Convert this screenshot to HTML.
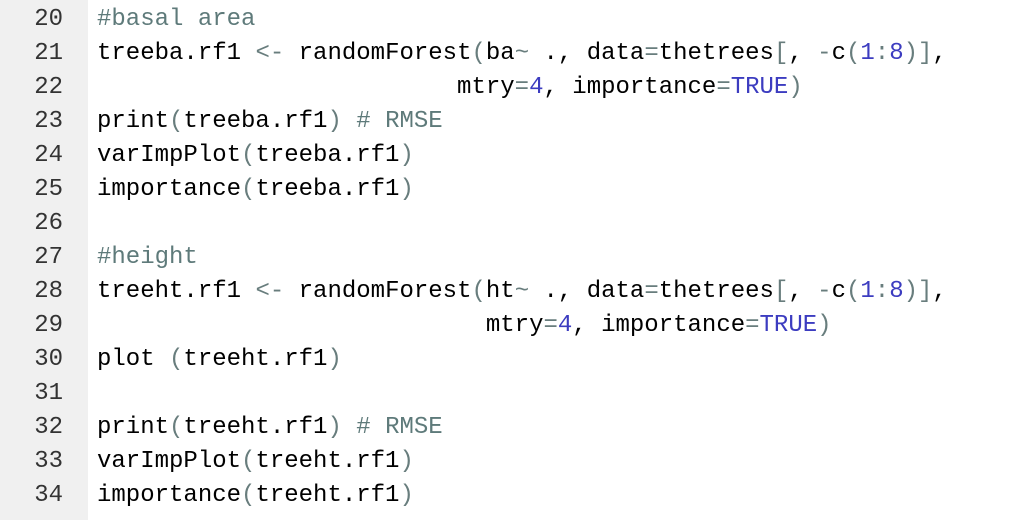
<!DOCTYPE html>
<html style="overflow:hidden;height:520px"><head><style>
body{margin:0;width:1022px;height:520px;overflow:hidden;background:#fff;font-family:"Liberation Mono",monospace;font-size:24px;position:relative;}
.g{position:absolute;left:0;top:0;width:88px;height:520px;background:#f0f0f0;}
.l{position:absolute;left:0;height:34px;line-height:34px;white-space:pre;color:#000;}
.n{position:absolute;left:0;width:63px;text-align:right;color:#333;}
.c{position:absolute;left:97px;}
.o{color:#687d7d}.m{color:#3c3cc0}.k{color:#5e7a7a}
</style></head><body>
<div class="g"></div>
<div class="l" style="top:3px"><span class="n">20</span><span class="c"><span class="k">#basal area</span></span></div>
<div class="l" style="top:37px"><span class="n">21</span><span class="c">treeba.rf1 <span class="o">&lt;-</span> randomForest<span class="o">(</span>ba<span class="o">~</span> ., data<span class="o">=</span>thetrees<span class="o">[</span>, <span class="o">-</span>c<span class="o">(</span><span class="m">1</span><span class="o">:</span><span class="m">8</span><span class="o">)]</span>,</span></div>
<div class="l" style="top:71px"><span class="n">22</span><span class="c">                         mtry<span class="o">=</span><span class="m">4</span>, importance<span class="o">=</span><span class="m">TRUE</span><span class="o">)</span></span></div>
<div class="l" style="top:105px"><span class="n">23</span><span class="c">print<span class="o">(</span>treeba.rf1<span class="o">)</span> <span class="k"># RMSE</span></span></div>
<div class="l" style="top:139px"><span class="n">24</span><span class="c">varImpPlot<span class="o">(</span>treeba.rf1<span class="o">)</span></span></div>
<div class="l" style="top:173px"><span class="n">25</span><span class="c">importance<span class="o">(</span>treeba.rf1<span class="o">)</span></span></div>
<div class="l" style="top:207px"><span class="n">26</span></div>
<div class="l" style="top:241px"><span class="n">27</span><span class="c"><span class="k">#height</span></span></div>
<div class="l" style="top:275px"><span class="n">28</span><span class="c">treeht.rf1 <span class="o">&lt;-</span> randomForest<span class="o">(</span>ht<span class="o">~</span> ., data<span class="o">=</span>thetrees<span class="o">[</span>, <span class="o">-</span>c<span class="o">(</span><span class="m">1</span><span class="o">:</span><span class="m">8</span><span class="o">)]</span>,</span></div>
<div class="l" style="top:309px"><span class="n">29</span><span class="c">                           mtry<span class="o">=</span><span class="m">4</span>, importance<span class="o">=</span><span class="m">TRUE</span><span class="o">)</span></span></div>
<div class="l" style="top:343px"><span class="n">30</span><span class="c">plot <span class="o">(</span>treeht.rf1<span class="o">)</span></span></div>
<div class="l" style="top:377px"><span class="n">31</span></div>
<div class="l" style="top:411px"><span class="n">32</span><span class="c">print<span class="o">(</span>treeht.rf1<span class="o">)</span> <span class="k"># RMSE</span></span></div>
<div class="l" style="top:445px"><span class="n">33</span><span class="c">varImpPlot<span class="o">(</span>treeht.rf1<span class="o">)</span></span></div>
<div class="l" style="top:479px"><span class="n">34</span><span class="c">importance<span class="o">(</span>treeht.rf1<span class="o">)</span></span></div>
</body></html>
